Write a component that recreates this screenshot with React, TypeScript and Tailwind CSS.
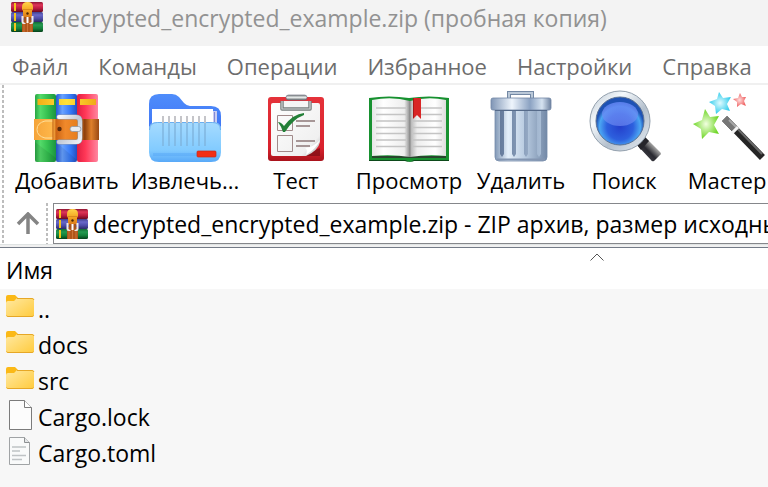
import type { ReactNode } from "react";

const menu = ["Файл", "Команды", "Операции", "Избранное", "Настройки", "Справка"];

function ArchiveIcon() {
  return (
    <svg viewBox="0 0 32 30" className="h-[30px] w-8 shrink-0" aria-hidden="true">
      <defs>
        <linearGradient id="bandRed" x2="0" y2="1">
          <stop offset="0" stopColor="#8e1733" /><stop offset=".3" stopColor="#df3558" /><stop offset=".65" stopColor="#b81c40" /><stop offset="1" stopColor="#680a22" />
        </linearGradient>
        <linearGradient id="bandBlue" x2="0" y2="1">
          <stop offset="0" stopColor="#41418d" /><stop offset=".3" stopColor="#6868c9" /><stop offset=".65" stopColor="#4d4da8" /><stop offset="1" stopColor="#2b2b66" />
        </linearGradient>
        <linearGradient id="bandGreen" x2="0" y2="1">
          <stop offset="0" stopColor="#126b34" /><stop offset=".3" stopColor="#249a50" /><stop offset=".65" stopColor="#14803a" /><stop offset="1" stopColor="#06401a" />
        </linearGradient>
        <linearGradient id="strap" x2="0" y2="1">
          <stop offset="0" stopColor="#ffd54a" /><stop offset=".5" stopColor="#f5a623" /><stop offset="1" stopColor="#d9771a" />
        </linearGradient>
      </defs>
      <rect width="32" height="10" rx="1.5" fill="url(#bandRed)" />
      <rect y="10" width="32" height="10" rx="1.5" fill="url(#bandBlue)" />
      <rect y="20" width="32" height="10" rx="1.5" fill="url(#bandGreen)" />
      <path d="M3 1h2v8H3zM3 11h2v8H3zM3 21h2v8H3z" fill="#f5c518" />
      <rect x="11" y="18" width="11" height="12" fill="#b0561a" />
      <path d="M13 21v9M16.500 21v9M20 21v9" stroke="#cc7436" strokeWidth="1" />
      <path d="M11 5q0-5 5.500-5T22 5v2l-1 2v7h-9V9l-1-2z" fill="url(#strap)" />
      <path d="M12 7.500h9" stroke="#d98a1c" />
      <circle cx="16.500" cy="11.500" r="1.200" fill="#4d2607" />
      <path d="M13 15h7v4h-7z" fill="#a5521d" />
      <path d="M10.500 14h2v6q1 1 2 1v1h-2q-2 0-2-2zM22.500 14h-2v6q-1 1-2 1v1h2q2 0 2-2z" fill="#ece9ee" />
      <rect x="15.500" y="15" width="2" height="6" fill="#fff" />
    </svg>
  );
}

function ToolIcon({ children }: { children: ReactNode }) {
  return (
    <svg viewBox="0 0 96 76" className="h-[76px] w-24" aria-hidden="true">
      {children}
    </svg>
  );
}

function AddIcon() {
  return (
    <ToolIcon>
      <defs>
        <linearGradient id="bookG"><stop offset="0" stopColor="#27a543" /><stop offset=".25" stopColor="#54db6a" /><stop offset=".6" stopColor="#35c050" /><stop offset="1" stopColor="#1b9440" /></linearGradient>
        <linearGradient id="bookB"><stop offset="0" stopColor="#2558d4" /><stop offset=".3" stopColor="#68a2ff" /><stop offset=".7" stopColor="#3478f6" /><stop offset="1" stopColor="#2450c0" /></linearGradient>
        <linearGradient id="bookR"><stop offset="0" stopColor="#e01e42" /><stop offset=".4" stopColor="#ff3857" /><stop offset="1" stopColor="#ff86a0" /></linearGradient>
        <linearGradient id="tag"><stop offset="0" stopColor="#f2ae16" /><stop offset=".5" stopColor="#ffe13a" /><stop offset="1" stopColor="#f0a916" /></linearGradient>
        <linearGradient id="belt"><stop offset="0" stopColor="#f5a43a" /><stop offset=".3" stopColor="#ffb84a" /><stop offset=".34" stopColor="#cc6414" /><stop offset=".48" stopColor="#f0892b" /><stop offset=".7" stopColor="#e57c1c" /><stop offset=".78" stopColor="#8d3f0c" /><stop offset=".88" stopColor="#df802b" /><stop offset="1" stopColor="#9a4a14" /></linearGradient>
        <linearGradient id="buckle" x2="1" y2="1"><stop offset="0" stopColor="#f4f7fb" /><stop offset=".5" stopColor="#c3cad6" /><stop offset="1" stopColor="#eef1f6" /></linearGradient>
      </defs>
      <rect x="16" y="4" width="21" height="68" rx="2" fill="url(#bookG)" />
      <rect x="37" y="4" width="21" height="68" rx="2" fill="url(#bookB)" />
      <rect x="58" y="4" width="21" height="68" rx="2" fill="url(#bookR)" />
      <path d="M16 52 37 68v4H16zM37 52 58 70v2H37z" fill="#000" opacity=".08" />
      <path d="M18.500 9h16.500v6h-16.500zM40 9h16v6H40zM61 9h16v6H61z" fill="url(#tag)" />
      <path d="M15 29h65v21H15z" fill="url(#belt)" />
      <path d="M34 31H26q-8 2-8 8.500T26 48h8" fill="none" stroke="#ffdf9a" strokeWidth="1" />
      <path d="M34 29v21" stroke="#b9560e" />
      <circle cx="40.500" cy="39" r="2.200" fill="#5b2b0c" />
      <path d="M40 27h17q4 0 4 4v17q0 4-4 4H40" fill="none" stroke="#8f99ab" strokeWidth="5" strokeLinecap="round" />
      <path d="M40 27h17q4 0 4 4v17q0 4-4 4H40" fill="none" stroke="url(#buckle)" strokeWidth="4" strokeLinecap="round" />
      <rect x="51" y="36.500" width="11" height="5" rx="2.500" fill="#e7ebf2" stroke="#8c95a5" strokeWidth=".8" />
    </ToolIcon>
  );
}

function ExtractIcon() {
  return (
    <ToolIcon>
      <defs>
        <linearGradient id="folderBack" x2="0" y2="1"><stop offset="0" stopColor="#4f8dfb" /><stop offset="1" stopColor="#3568f2" /></linearGradient>
        <linearGradient id="folderFront" x2="0" y2="1"><stop offset="0" stopColor="#a6dbff" /><stop offset=".7" stopColor="#82cbff" /><stop offset="1" stopColor="#58a9f8" /></linearGradient>
      </defs>
      <path d="M12 14Q12 4 22 4h13q4 0 7 3l5 6q3 3 6 3h21q10 0 10 10v34H12z" fill="url(#folderBack)" />
      <path d="M72 21h8v40h-8z" fill="#c9cdf2" /><path d="M77.500 22v30" stroke="#8189d6" />
      <path d="M15 19h61v44H15z" fill="#fff" />
      <path d="M12 40q0-8 8-8h56q8 0 8 8v22q0 10-10 10H22q-10 0-10-10z" fill="url(#folderFront)" />
      <path d="M12.500 40q0-7.500 8-7.500h55q8 0 8 7.500" fill="none" stroke="#69aef0" />
      <path d="M16 63h62v3H16z" fill="#4ea0f4" opacity=".35" />
      <path d="M26 26v7M32 26v7M38 26v7M44 26v7M50 26v7M56 26v7M62 26v7M68 26v7" stroke="#c5c5c9" strokeWidth="2" />
      <path d="M26 33v23M32 33v23M38 33v23M44 33v23M50 33v23M56 33v23M62 33v23M68 33v23" stroke="#7fb4dd" strokeWidth="2" opacity=".7" />
      <rect x="60" y="61" width="19" height="6" rx="1" fill="#f32e16" stroke="#c5281a" strokeWidth=".7" />
    </ToolIcon>
  );
}

function TestIcon() {
  return (
    <ToolIcon>
      <defs>
        <linearGradient id="board" x2="0" y2="1"><stop offset="0" stopColor="#e5323a" /><stop offset=".8" stopColor="#d9222d" /><stop offset="1" stopColor="#a9131c" /></linearGradient>
        <linearGradient id="sheet" x2="1" y2="1"><stop offset="0" stopColor="#fff" /><stop offset=".8" stopColor="#f0f0f0" /><stop offset="1" stopColor="#aaa" /></linearGradient>
        <linearGradient id="clip" x2="0" y2="1"><stop offset="0" stopColor="#858b8b" /><stop offset=".5" stopColor="#e3e7e7" /><stop offset="1" stopColor="#6b7070" /></linearGradient>
      </defs>
      <rect x="20" y="7" width="56" height="64" rx="3" fill="url(#board)" />
      <path d="M72 58v8H54z" fill="#7a0d14" opacity=".7" />
      <path d="M25 13h45q2 0 2 2v37q-2 9-14 14H25q-2 0-2-2V15q0-2 2-2z" fill="url(#sheet)" />
      <path d="M72 50q-3 8-14 15 2-6-1-7 9-1 15-8z" fill="#fff" />
      <path d="M34 11v8h28v-8" fill="#f5f5f5" stroke="#777d7d" strokeWidth="3.500" strokeLinejoin="round" />
      <path d="M34 11v8h28v-8" fill="none" stroke="#ced3d3" strokeWidth="1.200" strokeLinejoin="round" />
      <rect x="38" y="5" width="21" height="5" rx="2.500" fill="url(#clip)" stroke="#667" strokeWidth=".6" />
      <path d="M29.500 25.500h15v15h-15zM29.500 45.500h15v16h-15z" fill="none" stroke="#a18a8a" />
      <path d="M48 31h19M48 36h14M48 51h19M48 56h14" stroke="#8d7878" strokeWidth="1.300" />
      <path d="M30 32q3 0 6 4 9-12 20-13v2Q45 29 37 42h-2q-2-6-5-10z" fill="#238038" />
    </ToolIcon>
  );
}

function ViewIcon() {
  return (
    <ToolIcon>
      <defs>
        <linearGradient id="pageL"><stop offset="0" stopColor="#e6e6e6" /><stop offset=".3" stopColor="#fff" /><stop offset=".85" stopColor="#eee" /><stop offset="1" stopColor="#8d8d8d" /></linearGradient>
        <linearGradient id="pageR"><stop offset="0" stopColor="#b0b0b0" /><stop offset=".2" stopColor="#eee" /><stop offset=".7" stopColor="#fff" /><stop offset="1" stopColor="#ddd" /></linearGradient>
      </defs>
      <path d="M8 8q20-3 40 0 20-3 40 0v63H53l-4 1-5-1H8z" fill="#179130" />
      <path d="M8 70h36l5 2 4-2h35v1H53l-4 1-5-1H8z" fill="#0c4a1a" />
      <path d="M11 66h74v2H11z" fill="#28452d" />
      <path d="M11 10q20-4 38 1v56q-18-3-38-1z" fill="url(#pageL)" />
      <path d="M49 11q18-5 36-1v56q-18-2-36 1z" fill="url(#pageR)" />
      <path d="M49 11v56" stroke="#888" />
      <path d="M15 18h30M15 24.500h30M15 31h30M15 37.500h30M15 43.500h30M15 50h30M15 56.500h30M52 18h29M52 24.500h29M52 31h29M52 37.500h29M52 43.500h29M52 50h29M52 56.500h29" stroke="#c4c4c4" strokeWidth="1.500" />
      <path d="M52 8h8v21l-4-4-4 4z" fill="#d92525" /><path d="M52.500 8v20" stroke="#a91818" />
    </ToolIcon>
  );
}

function DeleteIcon() {
  return (
    <ToolIcon>
      <defs>
        <linearGradient id="lid"><stop offset="0" stopColor="#7f95b5" /><stop offset=".35" stopColor="#eef5fc" /><stop offset=".65" stopColor="#8ba2c2" /><stop offset=".85" stopColor="#d5e2f0" /><stop offset="1" stopColor="#6e82a0" /></linearGradient>
        <linearGradient id="bin"><stop offset="0" stopColor="#8198b6" /><stop offset=".25" stopColor="#e4effa" /><stop offset=".6" stopColor="#b5c8de" /><stop offset="1" stopColor="#7389a7" /></linearGradient>
        <linearGradient id="groove"><stop offset="0" stopColor="#657b9c" /><stop offset="1" stopColor="#a9bdd5" /></linearGradient>
      </defs>
      <path d="M36 9V3h23v6" fill="none" stroke="#7388a4" strokeWidth="4" />
      <path d="M36 9V3h23v6" fill="none" stroke="#bac8d8" strokeWidth="2" />
      <path d="M22 19h52v48q0 4-4 4H26q-4 0-4-4z" fill="url(#bin)" stroke="#758ba9" strokeWidth=".8" />
      <path d="M27 20h4v44l-2 3-2-3zM39 20h4v44l-2 3-2-3zM51 20h4v44l-2 3-2-3zM64 20h4v44l-2 3-2-3z" fill="url(#groove)" />
      <path d="M24 69.500h48" stroke="#8496b1" strokeWidth="2" />
      <rect x="18" y="8" width="60" height="12" rx="2" fill="url(#lid)" stroke="#7186a4" strokeWidth=".8" />
      <path d="M22 20.500h52" stroke="#566b8a" />
    </ToolIcon>
  );
}

function SearchIcon() {
  return (
    <ToolIcon>
      <defs>
        <radialGradient id="lens" cy=".62"><stop offset="0" stopColor="#2440cc" /><stop offset=".55" stopColor="#2d60de" /><stop offset=".85" stopColor="#4ba6f3" /><stop offset="1" stopColor="#1e52b5" /></radialGradient>
        <linearGradient id="rim" x2="1" y2="1"><stop offset="0" stopColor="#b9c5d1" /><stop offset=".3" stopColor="#f5f9fc" /><stop offset=".6" stopColor="#b4c0cd" /><stop offset="1" stopColor="#e8eef4" /></linearGradient>
        <linearGradient id="grip" x1="1" x2="0" y2="1"><stop offset="0" stopColor="#888" /><stop offset=".35" stopColor="#9b9b9b" /><stop offset=".55" stopColor="#292930" /><stop offset="1" stopColor="#55555c" /></linearGradient>
        <linearGradient id="shine" x2="0" y2="1"><stop offset="0" stopColor="#5f84f2" stopOpacity=".9" /><stop offset="1" stopColor="#7590f5" stopOpacity=".6" /></linearGradient>
      </defs>
      <path d="m61 55 8-8 15 15q2 2 0 3l-6 6q-2 1-3-1z" fill="url(#grip)" />
      <path d="m61 55 8-8 4 4-8 9z" fill="#25252b" />
      <circle cx="44" cy="31" r="30" fill="url(#rim)" stroke="#93a0ad" />
      <circle cx="44" cy="31" r="24" fill="url(#lens)" stroke="#5a7194" />
      <ellipse cx="44" cy="24" rx="18" ry="12" fill="url(#shine)" />
    </ToolIcon>
  );
}

function WizardIcon() {
  return (
    <ToolIcon>
      <defs>
        <radialGradient id="starG"><stop offset="0" stopColor="#f2ffe0" /><stop offset="1" stopColor="#6fd628" /></radialGradient>
        <radialGradient id="starB"><stop offset="0" stopColor="#e0fbff" /><stop offset="1" stopColor="#35cdec" /></radialGradient>
        <radialGradient id="starR"><stop offset="0" stopColor="#ffdede" /><stop offset="1" stopColor="#ef6464" /></radialGradient>
      </defs>
      <path d="m26 19 5 8 9-1-5 9 5 9-10-2-7 7-1-10-8-5 9-4z" fill="url(#starG)" />
      <path d="m40 2 4 6 8-1-4 7 3 7-8-2-6 5-1-8-6-4 8-3z" fill="url(#starB)" />
      <path d="m61 3 2 4h4l-2 4 2 5-5-2-4 3v-5l-4-3 5-1z" fill="url(#starR)" />
      <path d="M48 31 81 65" stroke="#252525" strokeWidth="7" strokeLinecap="square" />
      <path d="m50 30 33 34" stroke="#686868" strokeWidth="2" />
      <path d="m48 31 7 7" stroke="#777" strokeWidth="7" strokeLinecap="square" />
      <path d="m50 30 7 7" stroke="#a7a7a7" strokeWidth="2" />
      <path d="m53 43 6-6" stroke="#f4f4f4" strokeWidth="3" />
    </ToolIcon>
  );
}

const tools = [
  { label: "Добавить", icon: <AddIcon />, width: "w-[118px]" },
  { label: "Извлечь...", icon: <ExtractIcon />, width: "w-[118px]" },
  { label: "Тест", icon: <TestIcon />, width: "w-[104px]" },
  { label: "Просмотр", icon: <ViewIcon />, width: "w-[122px]" },
  { label: "Удалить", icon: <DeleteIcon />, width: "w-[102px]" },
  { label: "Поиск", icon: <SearchIcon />, width: "w-[104px]" },
  { label: "Мастер", icon: <WizardIcon />, width: "w-[102px]" },
];

function FolderIcon() {
  return (
    <svg viewBox="0 0 32 32" className="size-8" aria-hidden="true">
      <defs>
        <linearGradient id="folder" x2="1" y2="1"><stop offset="0" stopColor="#ffe9a3" /><stop offset="1" stopColor="#ffcb3d" /></linearGradient>
      </defs>
      <path d="M2 12V6q0-2 2-2h7l3 3v5z" fill="#fbb917" />
      <path d="M2 12q0-2 2-2h6l3-3h15q2 0 2 2v15q0 2-2 2H4q-2 0-2-2z" fill="url(#folder)" />
      <path d="M13 7.500h15q1.500 0 2 1.500M2.500 24.500q.5 1 1.500 1h24q1 0 1.500-1" fill="none" stroke="#e6a726" />
    </svg>
  );
}

function FileIcon({ lines }: { lines?: boolean }) {
  return lines ? (
    <svg viewBox="0 0 32 32" className="size-8" aria-hidden="true">
      <path d="M5.500 2.500h15l5 5v22h-20z" fill="#f9fafa" stroke="#a0a3a5" />
      <path d="M20.500 2.500v5h5" fill="#e4e6e7" stroke="#8d9092" />
      <path d="M8 12h14M8 16h8M8 20.500h14M8 24.500h10" stroke="#bfc3c5" strokeWidth="1.600" />
    </svg>
  ) : (
    <svg viewBox="0 0 32 32" className="size-8" aria-hidden="true">
      <path d="M5.500 1.500h15l7 7v22h-22z" fill="#fcfcfc" stroke="#7b7b7b" />
      <path d="M20.500 1.500v7h7" fill="#fff" stroke="#7b7b7b" />
    </svg>
  );
}

const files = [
  { name: "..", icon: <FolderIcon /> },
  { name: "docs", icon: <FolderIcon /> },
  { name: "src", icon: <FolderIcon /> },
  { name: "Cargo.lock", icon: <FileIcon /> },
  { name: "Cargo.toml", icon: <FileIcon lines /> },
];

function Grip() {
  return (
    <div className="w-[2px] shrink-0 self-stretch bg-[repeating-linear-gradient(to_bottom,#bdbdbd_0_3px,#ffffff_3px_5px)]" />
  );
}

export default function App() {
  return (
    <div className="flex min-h-screen flex-col overflow-hidden bg-[#f7f7f7] font-['Open_Sans','Noto_Sans',sans-serif] text-[23px] leading-[28px] text-black">
      <header className="flex h-[46px] items-start gap-[10px] bg-[#f3f3f3] pt-[2px] pl-[11px] text-[#929292]">
        <ArchiveIcon />
        <h1 className="pt-[2px] whitespace-nowrap">decrypted_encrypted_example.zip (пробная копия)</h1>
      </header>

      <nav className="flex h-[39px] items-center gap-[30px] border-b-2 border-[#f0f0f0] bg-white pt-[2px] pl-3 text-[22px] leading-[28px] text-[#6d6d6d]">
        {menu.map((m) => (
          <button key={m} type="button" className="whitespace-nowrap">{m}</button>
        ))}
      </nav>

      <div className="flex bg-white pl-[2px]">
        <Grip />
        <div className="min-w-0 flex-1">
          <div className="flex h-[118px] overflow-hidden pt-[5px] pl-1 text-[22px] leading-[28px]">
            {tools.map((t) => (
              <button key={t.label} type="button" className={`flex shrink-0 flex-col items-center whitespace-nowrap ${t.width}`}>
                {t.icon}
                <span>{t.label}</span>
              </button>
            ))}
          </div>
          <div className="flex h-[41px] items-stretch">
            <button type="button" aria-label="Вверх" className="flex w-[42px] items-center justify-center pl-[6px]">
              <svg viewBox="0 0 24 24" className="size-6" aria-hidden="true">
                <path d="M12 22V3M2 12 12 2l10 10" fill="none" stroke="#848484" strokeWidth="3.500" />
              </svg>
            </button>
            <Grip />
            <div className="ml-[5px] flex min-w-0 flex-1 items-center gap-[5px] border border-r-0 border-[#85878b] pl-[2px]">
              <ArchiveIcon />
              <input
                aria-label="Адрес"
                readOnly
                value="decrypted_encrypted_example.zip - ZIP архив, размер исходных файлов"
                className="h-9 min-w-0 flex-1 bg-transparent leading-9 outline-none"
              />
            </div>
          </div>
        </div>
      </div>
      <div className="h-[4px] border-t border-b border-t-[#dfe3e3] border-b-[#747b87] bg-[#f0f0f0]" />

      <table className="w-full border-collapse text-left">
        <thead>
          <tr className="h-[41px] bg-white">
            <th className="relative p-0 pt-[2px] pl-[6px] font-normal">
              Имя
              <svg viewBox="0 0 14 8" className="absolute top-[5px] left-[590px] h-2 w-[14px]" aria-hidden="true">
                <path d="m.5 7.500 6.500-6.500 6.500 6.500" fill="none" stroke="#555" />
              </svg>
            </th>
          </tr>
        </thead>
        <tbody>
          {files.map((f) => (
            <tr key={f.name} className="h-9">
              <td className="p-0 pl-1">
                <div className="flex items-start gap-[2px]">
                  {f.icon}
                  <span className="pt-[4px]">{f.name}</span>
                </div>
              </td>
            </tr>
          ))}
        </tbody>
      </table>
    </div>
  );
}
